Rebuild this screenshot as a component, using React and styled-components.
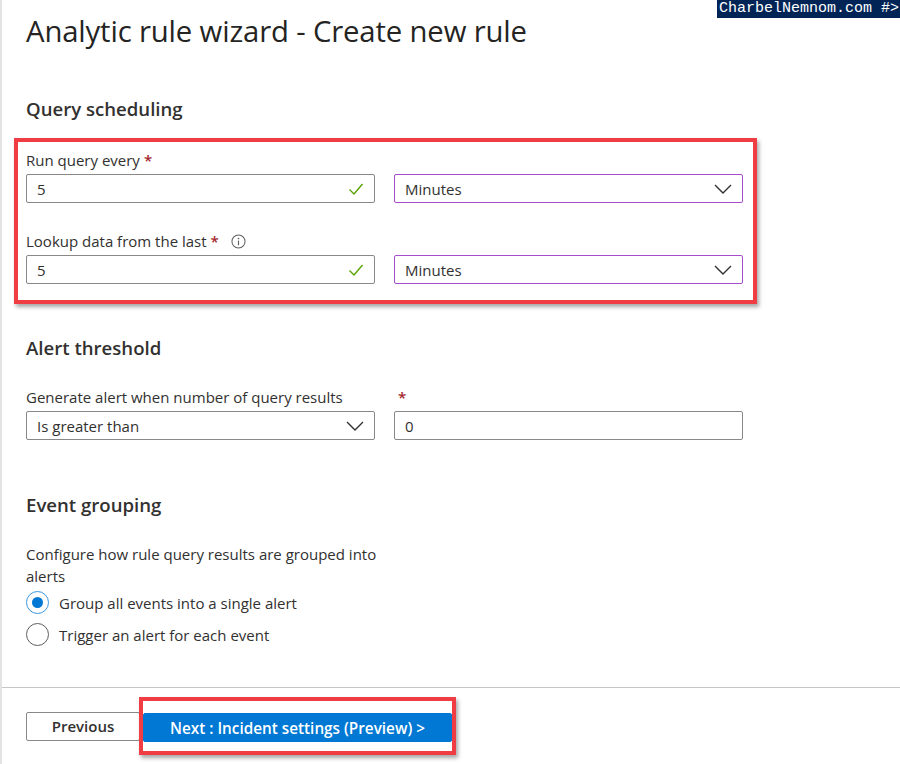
import React from "react";
import styled, { createGlobalStyle } from "styled-components";

const Global = createGlobalStyle`
  html, body { margin: 0; padding: 0; background: #fff; }
  body { font-family: "Open Sans", "Noto Sans", sans-serif; color: #323130; }
  * { box-sizing: border-box; }
`;

const Page = styled.div`
  position: relative;
  width: 900px;
  height: 764px;
  border-left: 2px solid #e3e3e3;
  display: flex;
  flex-direction: column;
  overflow: hidden;
`;

const Watermark = styled.div`
  position: absolute;
  top: 0;
  right: 0;
  background: #012456;
  color: #fff;
  font-family: "Liberation Mono", monospace;
  font-size: 15px;
  line-height: 18px;
  padding: 0 1px 0 2px;
  white-space: nowrap;
`;

const Main = styled.div`
  flex: 1;
  padding: 0 0 0 24px;
`;

const Title = styled.h1`
  margin: 11px 0 0;
  font-size: 29.3px;
  line-height: 40px;
  font-weight: 400;
  letter-spacing: -0.15px;
  color: #252423;
`;

const SectionTitle = styled.h2`
  margin: ${(p) => p.$top}px 0 0;
  font-size: 18.6px;
  line-height: 26px;
  font-weight: 600;
  color: #323130;
`;

const Highlight = styled.div`
  margin: 16px 0 0 -12px;
  width: 743px;
  border: 4px solid #f03d44;
  box-shadow: 2px 3px 4px rgba(0, 0, 0, 0.35);
  padding: 8px 10px 16px 8px;
`;

const FieldGrid = styled.div`
  display: grid;
  grid-template-columns: 349px 349px;
  column-gap: 19px;
  row-gap: 4px;
  margin-top: ${(p) => p.$top || 0}px;
`;

const Label = styled.div`
  display: flex;
  align-items: center;
  font-size: 15px;
  line-height: 20px;
  color: #323130;
  white-space: nowrap;
`;

const Star = styled.span`
  color: #a4262c;
  margin-left: 4px;
  font-weight: 600;
`;

const InfoIcon = styled.svg`
  margin-left: 12px;
  width: 15px;
  height: 15px;
`;

const Box = styled.div`
  height: 29px;
  display: flex;
  align-items: center;
  justify-content: space-between;
  padding: 0 10px 0 10px;
  border: 1px solid ${(p) => (p.$purple ? "#a54ccb" : "#8a8886")};
  border-radius: 2px;
  font-size: 15px;
  color: #323130;
  background: #fff;
`;

const Description = styled.div`
  margin-top: 25px;
  width: 370px;
  font-size: 15px;
  line-height: 22px;
`;

const RadioList = styled.div`
  display: flex;
  flex-direction: column;
  gap: 9px;
  margin-top: 4px;
`;

const RadioRow = styled.div`
  display: flex;
  align-items: center;
  gap: 10px;
  font-size: 15px;
  line-height: 22px;
`;

const RadioCircle = styled.span`
  width: 23px;
  height: 23px;
  border-radius: 50%;
  border: ${(p) => (p.$on ? "1.5px solid #3a96dd" : "1.5px solid #605e5c")};
  display: flex;
  align-items: center;
  justify-content: center;
  &::after {
    content: "";
    width: 11px;
    height: 11px;
    border-radius: 50%;
    background: ${(p) => (p.$on ? "#0078d4" : "transparent")};
  }
`;

const Footer = styled.div`
  border-top: 1px solid #c8c6c4;
  margin-left: -2px;
  padding: 9px 0 0 26px;
  height: 77px;
`;

const ButtonRow = styled.div`
  display: flex;
  align-items: center;
`;

const Button = styled.button`
  height: 29px;
  width: ${(p) => p.$w}px;
  font-family: "Open Sans", "Noto Sans", sans-serif;
  font-size: ${(p) => (p.$primary ? 15.3 : 15)}px;
  font-weight: 600;
  border-radius: 2px;
  border: 1px solid ${(p) => (p.$primary ? "#0078d4" : "#8a8886")};
  background: ${(p) => (p.$primary ? "#0078d4" : "#fff")};
  color: ${(p) => (p.$primary ? "#fff" : "#323130")};
  padding: 0;
  cursor: pointer;
`;

const ButtonHighlight = styled.div`
  margin-left: -1px;
  border: 4px solid #f03d44;
  box-shadow: 2px 3px 4px rgba(0, 0, 0, 0.35);
  padding: 12px 0 9px 0;
  display: flex;
`;

const Check = () => (
  <svg width="16" height="14" viewBox="0 0 16 14">
    <path d="M1.5 7.5 L6 12 L14.5 2" fill="none" stroke="#57a300" strokeWidth="1.4" />
  </svg>
);

const Chevron = () => (
  <svg width="18" height="10" viewBox="0 0 18 10">
    <path d="M1 1 L9 9 L17 1" fill="none" stroke="#323130" strokeWidth="1.4" />
  </svg>
);

const Info = () => (
  <InfoIcon viewBox="0 0 16 16">
    <circle cx="8" cy="8" r="7" fill="none" stroke="#605e5c" strokeWidth="1.1" />
    <circle cx="8" cy="4.8" r="0.9" fill="#605e5c" />
    <path d="M8 7 V12" stroke="#605e5c" strokeWidth="1.2" />
  </InfoIcon>
);

export default function App() {
  return (
    <>
      <Global />
      <Page>
        <Watermark>CharbelNemnom.com #&gt;</Watermark>
        <Main>
          <Title>Analytic rule wizard - Create new rule</Title>
          <SectionTitle $top={45}>Query scheduling</SectionTitle>
          <Highlight>
            <FieldGrid>
              <Label>
                Run query every<Star>*</Star>
              </Label>
              <div />
              <Box>
                5 <Check />
              </Box>
              <Box $purple>
                Minutes <Chevron />
              </Box>
            </FieldGrid>
            <FieldGrid $top={28}>
              <Label>
                Lookup data from the last<Star>*</Star>
                <Info />
              </Label>
              <div />
              <Box>
                5 <Check />
              </Box>
              <Box $purple>
                Minutes <Chevron />
              </Box>
            </FieldGrid>
          </Highlight>
          <SectionTitle $top={31}>Alert threshold</SectionTitle>
          <FieldGrid $top={26}>
            <Label>Generate alert when number of query results</Label>
            <Label>
              <Star>*</Star>
            </Label>
            <Box>
              Is greater than <Chevron />
            </Box>
            <Box>0</Box>
          </FieldGrid>
          <SectionTitle $top={52}>Event grouping</SectionTitle>
          <Description>Configure how rule query results are grouped into alerts</Description>
          <RadioList>
            <RadioRow>
              <RadioCircle $on />
              Group all events into a single alert
            </RadioRow>
            <RadioRow>
              <RadioCircle />
              Trigger an alert for each event
            </RadioRow>
          </RadioList>
        </Main>
        <Footer>
          <ButtonRow>
            <Button $w={114}>Previous</Button>
            <ButtonHighlight>
              <Button $primary $w={309}>
                Next : Incident settings (Preview) &gt;
              </Button>
            </ButtonHighlight>
          </ButtonRow>
        </Footer>
      </Page>
    </>
  );
}
